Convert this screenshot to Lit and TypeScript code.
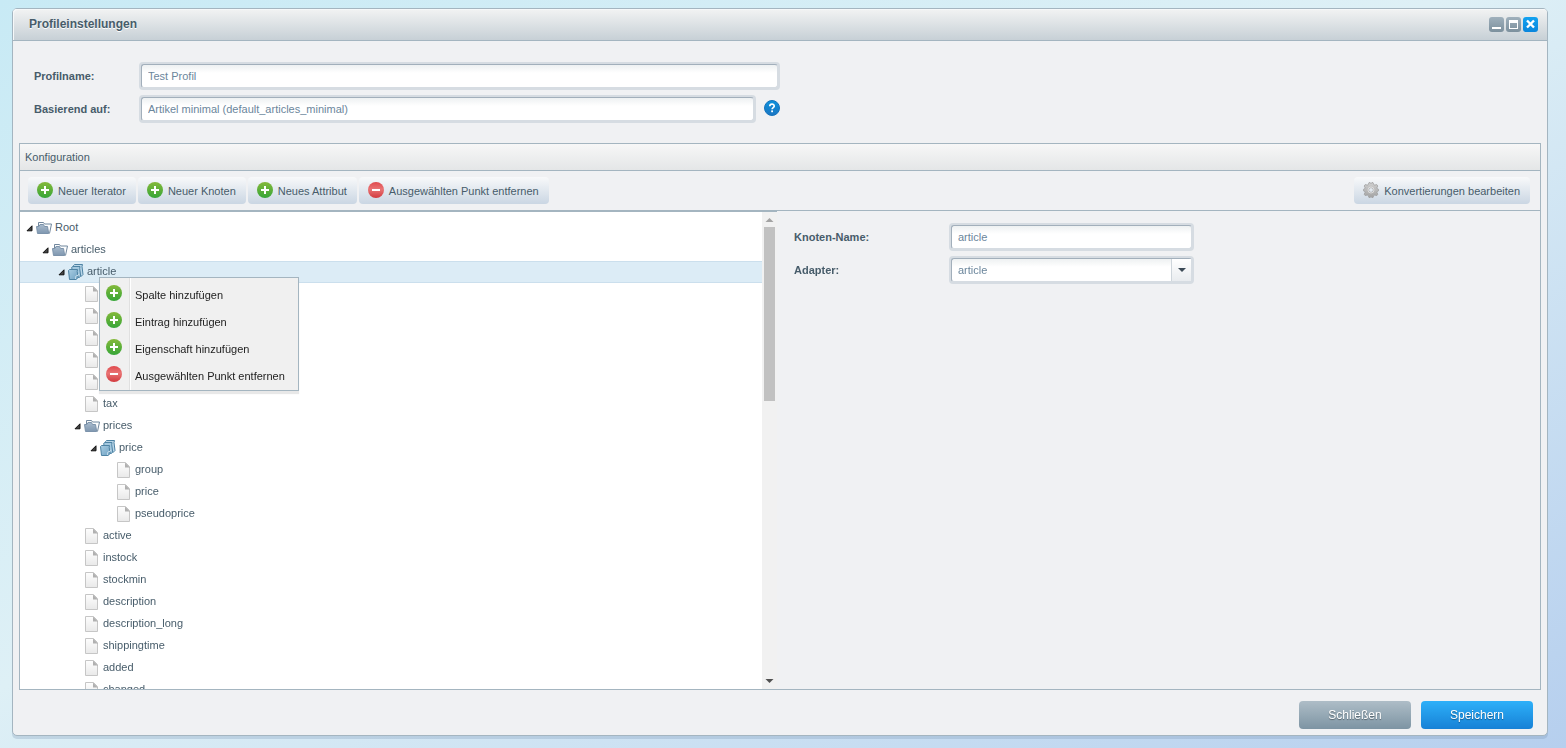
import { LitElement, html, svg, css } from "lit";
import { customElement, state } from "lit/decorators.js";
import { classMap } from "lit/directives/class-map.js";

type IconName = "plus" | "minus" | "gear" | "folder" | "stack" | "page" | "help";

interface TreeItem {
  depth: number;
  icon: IconName;
  label: string;
}

const shapes: Record<IconName, unknown> = {
  plus: svg`
    <defs><linearGradient id="g" x1="0" y1="0" x2="0" y2="1"><stop offset="0" stop-color="#85b93a"/><stop offset="1" stop-color="#36a638"/></linearGradient></defs>
    <circle cx="8" cy="8" r="8" fill="url(#g)"/>
    <path d="M7 4h2v3h3v2H9v3H7V9H4V7h3z" fill="#fff"/>`,
  minus: svg`
    <defs><linearGradient id="g" x1="0" y1="0" x2="0" y2="1"><stop offset="0" stop-color="#e0494c"/><stop offset=".45" stop-color="#e97475"/><stop offset="1" stop-color="#d23a3e"/></linearGradient></defs>
    <circle cx="8" cy="8" r="8" fill="url(#g)"/>
    <rect x="4" y="7" width="8" height="2" fill="#fff"/>`,
  gear: svg`
    <defs><linearGradient id="g" x1="0" y1="0" x2="0" y2="1"><stop offset="0" stop-color="#d0d0d0"/><stop offset="1" stop-color="#a3a3a3"/></linearGradient></defs>
    <path fill="url(#g)" stroke="#999" stroke-width=".7" fill-rule="evenodd" d="M6 .6h1.200l.8 1 .8-1H10l.8 2 .9.5 2.100-.5 1 1.400-.8 1.700.3 1 1.300.7v1.400l-1.300.7-.3 1 .8 1.700-1 1.400-2.100-.5-.9.5-.8 2H8.800l-.8-1-.8 1H6l-.8-2-.9-.5-2.100.5-1-1.400.8-1.700-.3-1L.4 8.800V7.400l1.300-.7.3-1-.8-1.700 1-1.400 2.100.5.9-.5zM8 5.600a2.400 2.400 0 1 0 0 4.800 2.400 2.400 0 0 0 0-4.800z"/>
    <circle cx="8" cy="8" r="3" fill="none" stroke="#e4e4e4" stroke-width=".8"/>`,
  folder: svg`
    <defs><linearGradient id="g" x1="0" y1="0" x2="0" y2="1"><stop offset="0" stop-color="#a9bbcd"/><stop offset="1" stop-color="#7f97b0"/></linearGradient></defs>
    <path d="M2.500 6V2.500h5l1 1.500h7L13.500 13.500" fill="#fbfcfd" stroke="#71879d"/>
    <path d="M.5 6.500h2.500l1-2h3.500l1 2h3l1.200 7H1.500z" fill="url(#g)" stroke="#7c93ab"/>`,
  stack: svg`
    <defs><linearGradient id="g" x1="0" y1="0" x2="1" y2="1"><stop offset="0" stop-color="#a9cde2"/><stop offset="1" stop-color="#6fa2c4"/></linearGradient></defs>
    <path d="M5.500 1.500L6.500.5h8l-.5 2 1 8-2 2z" fill="#b9d6e8" stroke="#4e83a4"/>
    <path d="M3.500 4L4.500 2.500h7.500l-.3 2 1 7.500-2 2z" fill="#a3c8df" stroke="#4e83a4"/>
    <path d="M.5 6.500L1.500 5.500h8l-.3 2 1 6-2.200 2H1.500z" fill="url(#g)" stroke="#4e83a4"/>
    <path d="M7.500 15q-.5-4 2.500-3.500l1-1.500" fill="none" stroke="#dbeaf3" stroke-width=".8"/>`,
  page: svg`
    <defs><linearGradient id="g" x1="0" y1="0" x2="0" y2="1"><stop offset="0" stop-color="#fefefe"/><stop offset="1" stop-color="#e9e9e9"/></linearGradient></defs>
    <path d="M1.500.5h8l4 4v11h-12z" fill="url(#g)" stroke="#c6c6c6"/>
    <path d="M9 .5l5 5H9z" fill="#b0b0b0"/>`,
  help: svg`
    <defs><linearGradient id="g" x1="0" y1="0" x2="0" y2="1"><stop offset="0" stop-color="#0d92dc"/><stop offset="1" stop-color="#1b76c2"/></linearGradient></defs>
    <circle cx="8" cy="8" r="7.500" fill="url(#g)" stroke="#1674bd"/>
    <path d="M5.800 6.200C5.800 3.500 10.300 3.500 10.200 6.100 10.100 7.600 8.100 7.600 8.100 9.300" fill="none" stroke="#fff" stroke-width="1.700"/>
    <rect x="7.200" y="10.400" width="1.800" height="1.800" fill="#fff"/>`,
};

@customElement("app-icon")
export class AppIcon extends LitElement {
  static properties = { name: { type: String } };
  declare name: IconName;

  static styles = css`
    :host { display: block; flex: none; width: 16px; height: 16px; }
    svg { display: block; }
  `;

  render() {
    return html`<svg width="16" height="16" viewBox="0 0 16 16" aria-hidden="true">${shapes[this.name]}</svg>`;
  }
}

const items: TreeItem[] = [
  { depth: 0, icon: "folder", label: "Root" },
  { depth: 1, icon: "folder", label: "articles" },
  { depth: 2, icon: "stack", label: "article" },
  { depth: 3, icon: "page", label: "id" },
  { depth: 3, icon: "page", label: "ean" },
  { depth: 3, icon: "page", label: "name" },
  { depth: 3, icon: "page", label: "text" },
  { depth: 3, icon: "page", label: "unit" },
  { depth: 3, icon: "page", label: "tax" },
  { depth: 3, icon: "folder", label: "prices" },
  { depth: 4, icon: "stack", label: "price" },
  { depth: 5, icon: "page", label: "group" },
  { depth: 5, icon: "page", label: "price" },
  { depth: 5, icon: "page", label: "pseudoprice" },
  { depth: 3, icon: "page", label: "active" },
  { depth: 3, icon: "page", label: "instock" },
  { depth: 3, icon: "page", label: "stockmin" },
  { depth: 3, icon: "page", label: "description" },
  { depth: 3, icon: "page", label: "description_long" },
  { depth: 3, icon: "page", label: "shippingtime" },
  { depth: 3, icon: "page", label: "added" },
  { depth: 3, icon: "page", label: "changed" },
];

const menuEntries: { icon: IconName; label: string }[] = [
  { icon: "plus", label: "Spalte hinzufügen" },
  { icon: "plus", label: "Eintrag hinzufügen" },
  { icon: "plus", label: "Eigenschaft hinzufügen" },
  { icon: "minus", label: "Ausgewählten Punkt entfernen" },
];

@customElement("app-root")
export class AppRoot extends LitElement {
  @state() private selected = 2;

  static styles = css`
    :host {
      display: flex;
      height: 100vh;
      box-sizing: border-box;
      padding: 8px 18px 12px 12px;
      background: linear-gradient(to bottom right, #c8eaf5, #def0f6 46%, #b6cfee);
      font: 11px/14px "Liberation Sans", Arial, sans-serif;
      color: #475c6a;
    }
    * { box-sizing: border-box; }
    button, input, select { font: inherit; color: inherit; margin: 0; }
    button { border: 0; padding: 0; }

    .window {
      flex: 1;
      min-width: 0;
      display: flex;
      flex-direction: column;
      border: 1px solid #a4b5c0;
      border-radius: 5px;
      background: #f0f1f3;
      box-shadow: 0 3px 0 rgba(110, 140, 170, 0.25);
    }
    .titlebar {
      display: flex;
      align-items: center;
      justify-content: space-between;
      height: 32px;
      padding: 0 9px 0 16px;
      border-bottom: 1px solid #a4b5c0;
      border-radius: 4px 4px 0 0;
      background: linear-gradient(#f2f3f3, #c7d0d6);
      box-shadow: inset 1px 1px 0 #f6f8f9;
    }
    .title { margin: 0; padding-bottom: 2px; font-size: 12px; line-height: 14px; text-shadow: 0 1px 0 #fff; }
    .tools { display: flex; gap: 2px; }
    .tool {
      width: 15px;
      height: 15px;
      border-radius: 3px;
      background: linear-gradient(#9fb0bc, #7c909d);
    }
    .tool svg { display: block; }
    .tool.close { background: linear-gradient(#12a2f0, #0a86dc); }

    .form { display: flex; flex-direction: column; gap: 5px; }
    .profile { max-width: 767px; padding: 21px 0 20px 21px; }
    .field { display: grid; grid-template-columns: 105px minmax(0, 1fr); align-items: center; }
    .field label { font-weight: bold; }
    .with-help { display: flex; align-items: center; gap: 8px; }
    .help { padding-bottom: 2px; background: none; border-radius: 8px; }
    .box {
      flex: 1;
      min-width: 0;
      display: flex;
      height: 28px;
      border: 2px solid #d6dce2;
      border-radius: 4px;
      background: #d6dce2;
    }
    .box input, .box select {
      flex: 1;
      min-width: 0;
      width: 100%;
      padding: 0 6px;
      border: 1px solid #d6dce2;
      border-top-color: #a2afbb;
      border-left-color: #a2afbb;
      border-radius: 3px;
      background: linear-gradient(#eef1f2, #fff 8px);
      color: #6b869c;
      outline: 0;
    }
    .box select { appearance: none; }
    .combo { position: relative; }
    .trigger {
      position: absolute;
      right: 1px;
      top: 1px;
      bottom: 1px;
      width: 20px;
      display: grid;
      place-items: center;
      border-left: 1px solid #ced5db;
      background: linear-gradient(#fff, #e9ecef);
      pointer-events: none;
    }

    .panel {
      flex: 1;
      min-height: 0;
      margin: 0 6px;
      display: flex;
      flex-direction: column;
      border: 1px solid #a4b5c0;
    }
    .panel-title {
      margin: 0;
      padding: 6px 5px;
      border-bottom: 1px solid #a4b5c0;
      background: linear-gradient(#f7f7f7, #e4e6e7);
      font-size: 11px;
      font-weight: normal;
    }
    .toolbar {
      display: flex;
      gap: 2px;
      padding: 6px 10px 6px 8px;
      border-bottom: 1px solid #a4b5c0;
    }
    .action {
      display: flex;
      align-items: center;
      gap: 5px;
      height: 27px;
      padding: 0 10px 0 9px;
      border-radius: 4px;
      background: linear-gradient(#f8f9fa, #cad6e3);
      white-space: nowrap;
    }
    .action app-icon { margin-bottom: 2px; }
    .action.end { margin-left: auto; }

    .split { flex: 1; min-height: 0; display: grid; grid-template-columns: minmax(0, 757fr) minmax(0, 763fr); }
    .tree-pane { display: flex; min-height: 0; border-top: 1px solid #a4b5c0; }
    .tree {
      flex: 1;
      min-width: 0;
      margin: 0;
      padding: 5px 0 0;
      list-style: none;
      overflow: hidden auto;
      scrollbar-width: none;
      background: #fff;
    }
    .row {
      position: relative;
      display: flex;
      align-items: center;
      height: 22px;
      padding-left: 4px;
      cursor: default;
    }
    .row.selected { background: #dcecf6; box-shadow: inset 0 1px #cbdfed, inset 0 -1px #cbdfed; }
    .indent { flex: none; width: calc(var(--depth) * 16px); }
    .twisty { flex: none; width: 12px; height: 8px; }
    .twisty svg { display: block; margin: 1px 0 0 2px; }
    .label { padding: 0 0 2px 3px; }

    .scrollbar {
      width: 15px;
      display: flex;
      flex-direction: column;
      align-items: center;
      background: #f1f1f1;
    }
    .scrollbar svg { flex: none; display: block; }
    .track { flex: 1; width: 11px; }
    .thumb { height: 39%; background: #c1c1c1; }

    .details { padding: 12px 17px; }
    .details .field { grid-template-columns: 155px minmax(0, 245px); }

    .menu {
      position: absolute;
      z-index: 1;
      left: 79px;
      top: 16px;
      width: 200px;
      margin: 0;
      padding: 3px 0 1px;
      list-style: none;
      border: 1px solid #a4b5c0;
      background: linear-gradient(90deg, #f0f0f0 29px, #e0e0e0 29px 30px, #fff 30px 31px, #f0f0f0 31px);
      box-shadow: 0 3px 1px rgba(0, 0, 0, 0.09);
    }
    .entry {
      display: flex;
      gap: 13px;
      width: 100%;
      height: 27px;
      padding: 4px 0 0 6px;
      background: none;
      color: #222;
      text-align: left;
    }
    .entry span { padding-top: 3px; }

    .footer { display: flex; justify-content: flex-end; gap: 10px; padding: 11px 14px 6px; }
    .big {
      width: 112px;
      height: 28px;
      border-radius: 4px;
      background: linear-gradient(#aebdc7, #7d94a3);
      color: #fff;
      font-size: 12px;
      text-shadow: 0 1px 1px rgba(0, 0, 0, 0.4);
    }
    .big.primary { background: linear-gradient(#2db0f9, #1781d6); }
  `;

  private renderMenu() {
    return html`<ul class="menu" role="menu">
      ${menuEntries.map(
        (e) => html`<li role="none">
          <button class="entry" role="menuitem"><app-icon .name=${e.icon}></app-icon><span>${e.label}</span></button>
        </li>`
      )}
    </ul>`;
  }

  private renderRow(item: TreeItem, index: number) {
    const open = item.icon !== "page";
    return html`<li
      class=${classMap({ row: true, selected: index === this.selected })}
      role="treeitem"
      aria-level=${item.depth + 1}
      aria-selected=${index === this.selected}
      @click=${() => (this.selected = index)}
    >
      <span class="indent" style="--depth:${item.depth}"></span>
      <span class="twisty">${open
        ? html`<svg width="8" height="7" viewBox="0 0 8 7"><path d="M6 .8v5H1z" fill="#444" stroke="#111"/></svg>`
        : null}</span>
      <app-icon .name=${item.icon}></app-icon>
      <span class="label">${item.label}</span>
      ${index === 2 ? this.renderMenu() : null}
    </li>`;
  }

  render() {
    return html`
      <main class="window">
        <header class="titlebar">
          <h1 class="title">Profileinstellungen</h1>
          <div class="tools">
            <button class="tool" aria-label="Minimieren">
              <svg width="15" height="15"><rect x="3" y="10" width="9" height="2" fill="#fff"/></svg>
            </button>
            <button class="tool" aria-label="Maximieren">
              <svg width="15" height="15"><path d="M3 3h9v9H3zM4 6v5h7V6z" fill="#fff" fill-rule="evenodd"/></svg>
            </button>
            <button class="tool close" aria-label="Fenster schließen">
              <svg width="15" height="15"><path d="M4 3.500l7 7M11 3.500l-7 7" stroke="#fff" stroke-width="2.400"/></svg>
            </button>
          </div>
        </header>

        <form class="form profile">
          <div class="field">
            <label for="profile">Profilname:</label>
            <div class="box"><input id="profile" type="text" value="Test Profil" /></div>
          </div>
          <div class="field">
            <label for="base">Basierend auf:</label>
            <div class="with-help">
              <div class="box"><input id="base" type="text" value="Artikel minimal (default_articles_minimal)" /></div>
              <button class="help" type="button" aria-label="Hilfe"><app-icon .name=${"help"}></app-icon></button>
            </div>
          </div>
        </form>

        <section class="panel">
          <h2 class="panel-title">Konfiguration</h2>
          <div class="toolbar">
            <button class="action"><app-icon .name=${"plus"}></app-icon>Neuer Iterator</button>
            <button class="action"><app-icon .name=${"plus"}></app-icon>Neuer Knoten</button>
            <button class="action"><app-icon .name=${"plus"}></app-icon>Neues Attribut</button>
            <button class="action"><app-icon .name=${"minus"}></app-icon>Ausgewählten Punkt entfernen</button>
            <button class="action end"><app-icon .name=${"gear"}></app-icon>Konvertierungen bearbeiten</button>
          </div>
          <div class="split">
            <div class="tree-pane">
              <ul class="tree" role="tree">${items.map((item, i) => this.renderRow(item, i))}</ul>
              <div class="scrollbar" aria-hidden="true">
                <svg width="15" height="15"><path d="M3.500 10h8l-4-4z" fill="#a3a3a3"/></svg>
                <div class="track"><div class="thumb"></div></div>
                <svg width="15" height="15"><path d="M3.500 5h8l-4 4z" fill="#505050"/></svg>
              </div>
            </div>
            <form class="form details">
              <div class="field">
                <label for="node">Knoten-Name:</label>
                <div class="box"><input id="node" type="text" value="article" /></div>
              </div>
              <div class="field">
                <label for="adapter">Adapter:</label>
                <div class="box combo">
                  <select id="adapter"><option>article</option></select>
                  <span class="trigger"><svg width="8" height="4"><path d="M0 0h8L4 4z" fill="#3c4a56"/></svg></span>
                </div>
              </div>
            </form>
          </div>
        </section>

        <footer class="footer">
          <button class="big">Schließen</button>
          <button class="big primary">Speichern</button>
        </footer>
      </main>
    `;
  }
}
